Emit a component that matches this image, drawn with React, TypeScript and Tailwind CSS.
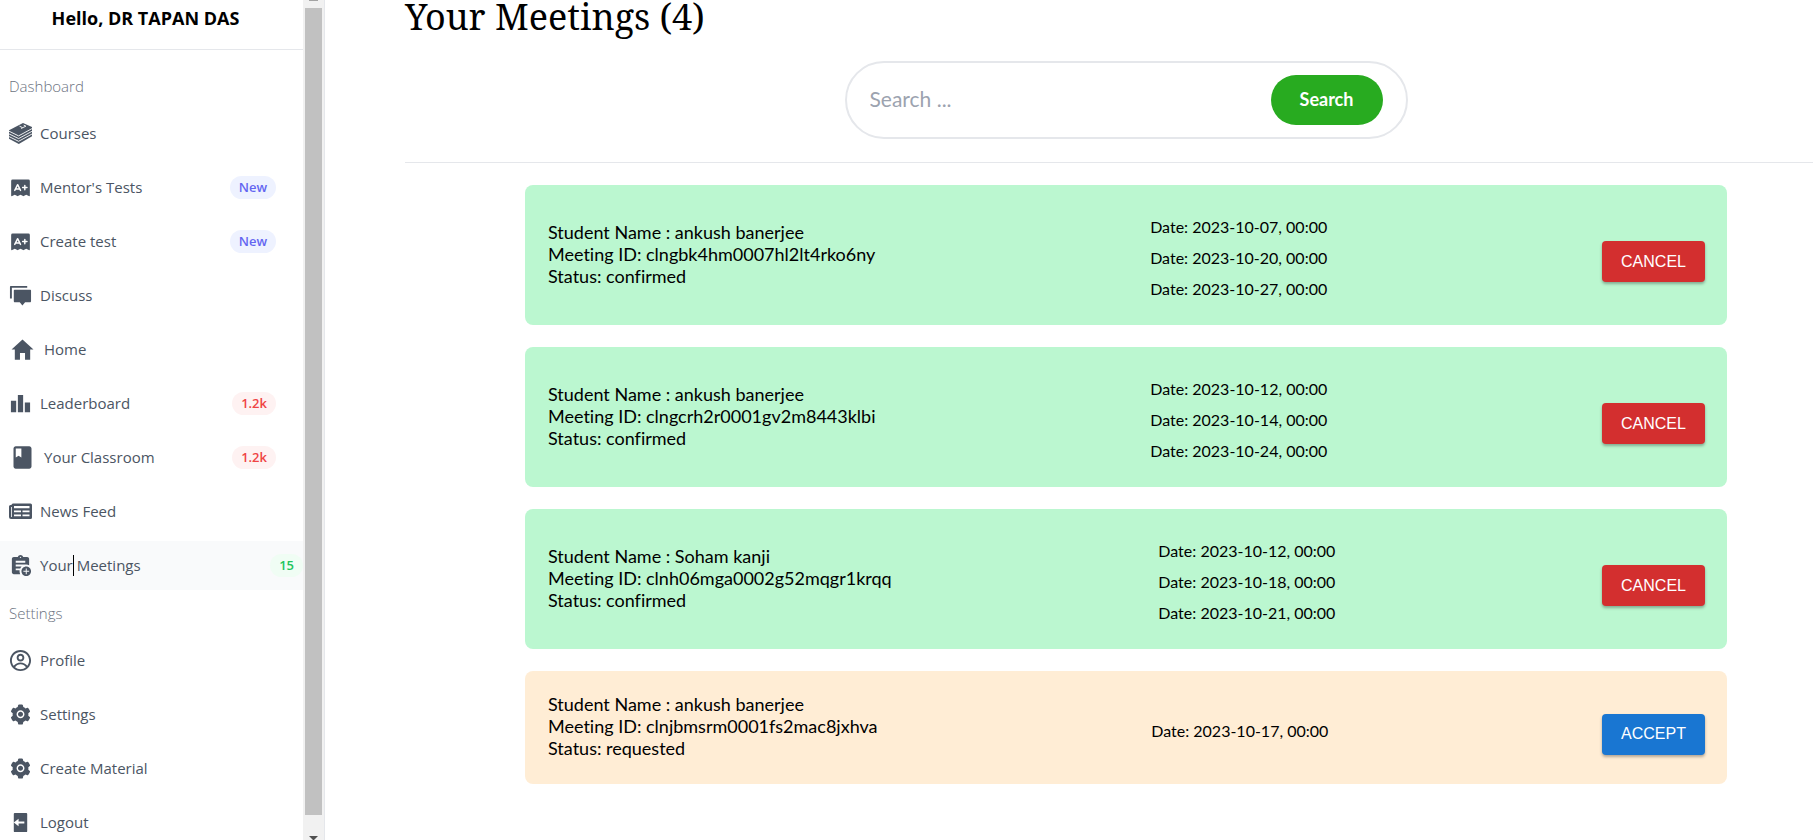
import type { ReactNode } from 'react';
import { AiFillSetting } from 'react-icons/ai';
import { BiSolidLogOut } from 'react-icons/bi';
import { CgProfile } from 'react-icons/cg';
import { IoMdHome } from 'react-icons/io';
import { MdAssignmentAdd, MdBook, MdLeaderboard } from 'react-icons/md';
import { PiExamFill } from 'react-icons/pi';
import { RiDiscussFill } from 'react-icons/ri';

function CoursesIcon() {
  return (
    <svg width="23" height="23" viewBox="0 0 23 23">
      <path d="M0 8.2L14 1l9 4v9.200L9.800 22 0 16.800z" fill="currentColor" />
      <path
        d="M0 9.200l9.600 4.700L23 6.600M0 11.900l9.600 4.700L23 9.300M0 14.600l9.600 4.700L23 12"
        fill="none"
        stroke="white"
        strokeWidth="0.9"
      />
      <path d="M10.500 4.200l3.200 1.500 3.200-1.500-2.200-1M13.700 5.700l-1.600.8" fill="none" stroke="white" strokeWidth="0.9" />
    </svg>
  );
}

function NewsIcon() {
  return (
    <svg width="23" height="23" viewBox="0 0 23 23">
      <path
        d="M4 3.500h17.500A1.500 1.500 0 0 1 23 5v12.500a1.500 1.500 0 0 1-1.500 1.500H2a2 2 0 0 1-2-2V6.500A1.500 1.500 0 0 1 1.500 5H2.500A1.500 1.500 0 0 1 4 3.500z"
        fill="currentColor"
      />
      <path
        d="M2 7h.8v10H2zM5 6h15.500v2.200H5zM5 10.500h7v1.800H5zM13.500 10.500h7v1.800h-7zM5 14.500h7v1.800H5zM13.500 14.500h7v1.800h-7z"
        fill="white"
      />
    </svg>
  );
}

type Tone = 'indigo' | 'red' | 'green';

const tones: Record<Tone, string> = {
  indigo: 'mr-[27px] bg-[#eef2ff] text-[#6366f1]',
  red: 'mr-[27px] bg-[#fef2f2] text-[#ef4444]',
  green: 'bg-[#f0fdf4] text-[#22c55e]',
};

type Item = { label: ReactNode; icon: ReactNode; badge?: string; tone?: Tone; active?: boolean };

const dashboard: Item[] = [
  { label: 'Courses', icon: <CoursesIcon /> },
  { label: "Mentor's Tests", icon: <PiExamFill size={23} />, badge: 'New', tone: 'indigo' },
  { label: 'Create test', icon: <PiExamFill size={23} />, badge: 'New', tone: 'indigo' },
  { label: 'Discuss', icon: <RiDiscussFill size={23} /> },
  { label: 'Home', icon: <IoMdHome size={27} /> },
  { label: 'Leaderboard', icon: <MdLeaderboard size={23} />, badge: '1.2k', tone: 'red' },
  { label: 'Your Classroom', icon: <MdBook size={27} />, badge: '1.2k', tone: 'red' },
  { label: 'News Feed', icon: <NewsIcon /> },
  {
    label: (
      <>
        <span className="relative">
          Your
          <span className="absolute top-0 -right-px h-[21px] w-px bg-black" />
        </span>{' '}
        Meetings
      </>
    ),
    icon: <MdAssignmentAdd size={23} />,
    badge: '15',
    tone: 'green',
    active: true,
  },
];

const settings: Item[] = [
  { label: 'Profile', icon: <CgProfile size={23} /> },
  { label: 'Settings', icon: <AiFillSetting size={23} /> },
  { label: 'Create Material', icon: <AiFillSetting size={23} /> },
  { label: 'Logout', icon: <BiSolidLogOut size={23} /> },
];

function NavGroup({ title, items }: { title: string; items: Item[] }) {
  return (
    <section>
      <h2 className="flex h-9 items-center pl-[9px] text-[15px] font-light text-[#6b7280]">{title}</h2>
      <ul className="flex flex-col gap-[5px] py-[5px]">
        {items.map((item, i) => (
          <li key={i}>
            <a
              href="#"
              className={
                item.active
                  ? 'flex h-[49px] items-center bg-[#f9fafb] pb-px pl-[9px] text-[#4b5563]'
                  : 'flex h-[49px] items-center pb-px pl-[9px] text-[#4b5563]'
              }
            >
              {item.icon}
              <span className="ml-2 pb-px text-[15px] leading-[22px]">{item.label}</span>
              {item.badge && item.tone && (
                <span
                  className={`ml-auto rounded-full px-[9px] text-[13px] leading-[23px] font-semibold ${tones[item.tone]}`}
                >
                  {item.badge}
                </span>
              )}
            </a>
          </li>
        ))}
      </ul>
    </section>
  );
}

const meetings = [
  { name: 'ankush banerjee', id: 'clngbk4hm0007hl2lt4rko6ny', status: 'confirmed', dates: ['2023-10-07', '2023-10-20', '2023-10-27'] },
  { name: 'ankush banerjee', id: 'clngcrh2r0001gv2m8443klbi', status: 'confirmed', dates: ['2023-10-12', '2023-10-14', '2023-10-24'] },
  { name: 'Soham kanji', id: 'clnh06mga0002g52mqgr1krqq', status: 'confirmed', dates: ['2023-10-12', '2023-10-18', '2023-10-21'] },
  { name: 'ankush banerjee', id: 'clnjbmsrm0001fs2mac8jxhva', status: 'requested', dates: ['2023-10-17'] },
];

export default function App() {
  return (
    <div className="flex h-screen overflow-hidden bg-white font-['Lato',sans-serif] text-black [font-variant-ligatures:none]">
      <aside className="flex shrink-0 border-r border-[#e5e7eb] font-['Open_Sans',sans-serif]">
        <div className="w-[303px] overflow-hidden">
          <p className="mb-[18px] flex h-[50px] justify-center border-b border-[#e5e7eb] pr-3 pt-[6px] text-[18px] leading-6 font-bold">
            Hello, DR TAPAN DAS
          </p>
          <NavGroup title="Dashboard" items={dashboard} />
          <NavGroup title="Settings" items={settings} />
        </div>
        <div className="flex w-[21px] flex-col items-center bg-[#f1f1f1]">
          <div className="h-px w-[9px] bg-[#a3a3a3]" />
          <div className="mt-[7px] w-[17px] flex-1 bg-[#c1c1c1]" />
          <svg className="mt-[21px]" width="9" height="4" viewBox="0 0 9 4">
            <path d="M0 0h9L4.500 4.500z" fill="#505050" />
          </svg>
        </div>
      </aside>

      <main className="min-w-0 flex-1 pl-20">
        <h1 className="h-[61px] font-['Noto_Serif','Liberation_Serif',serif] text-[36px] leading-[34px]">
          Your Meetings (4)
        </h1>
        <div className="border-b border-[#e5e7eb] pr-[86px] pb-[23px] pl-[120px]">
          <form
            className="mx-auto flex h-[78px] w-full max-w-[563px] items-center rounded-full border-2 border-[#e5e7eb] px-[23px]"
            onSubmit={(e) => e.preventDefault()}
          >
            <input
              type="text"
              aria-label="Search meetings"
              placeholder="Search ..."
              className="min-w-0 flex-1 bg-transparent pb-[3px] text-[21px] outline-none placeholder:text-[#9ca3af]"
            />
            <button type="submit" className="h-[50px] w-28 rounded-full bg-[#28ab20] pb-px text-[18px] font-bold text-white">
              Search
            </button>
          </form>
        </div>
        <ul className="flex flex-col gap-[22px] pt-[22px] pr-[86px] pl-[120px]">
          {meetings.map((m) => {
            const confirmed = m.status === 'confirmed';
            return (
              <li
                key={m.id}
                className={
                  confirmed
                    ? 'flex items-center justify-between rounded-lg bg-[#bbf7d0] py-[22px] pr-[22px] pl-[23px]'
                    : 'flex items-center justify-between rounded-lg bg-[#ffedd5] py-[22px] pr-[22px] pl-[23px]'
                }
              >
                <div className="pb-[3px] text-[18px] leading-[22px]">
                  <p>Student Name : {m.name}</p>
                  <p>Meeting ID: {m.id}</p>
                  <p>Status: {m.status}</p>
                </div>
                <ul className="pb-[3px] text-[16px] leading-[22px]">
                  {m.dates.map((d) => (
                    <li key={d} className="pt-[9px]">
                      Date: {d}, 00:00
                    </li>
                  ))}
                </ul>
                <button
                  type="button"
                  className={
                    confirmed
                      ? "mt-[13px] h-[41px] w-[103px] rounded bg-[#d32f2f] font-['Liberation_Sans',sans-serif] text-[16px] text-white shadow-[0_2px_3px_rgba(0,0,0,0.3)]"
                      : "mt-[13px] h-[41px] w-[103px] rounded bg-[#1976d2] font-['Liberation_Sans',sans-serif] text-[16px] text-white shadow-[0_2px_3px_rgba(0,0,0,0.3)]"
                  }
                >
                  {confirmed ? 'CANCEL' : 'ACCEPT'}
                </button>
              </li>
            );
          })}
        </ul>
      </main>
    </div>
  );
}
